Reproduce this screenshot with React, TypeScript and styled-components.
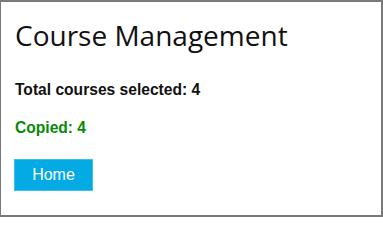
import React from "react";
import styled, { createGlobalStyle } from "styled-components";

const Global = createGlobalStyle`
  html, body { margin: 0; padding: 0; background: #fff; }
  body { width: 383px; height: 217px; overflow: hidden; }
`;

const Frame = styled.div`
  box-sizing: border-box;
  width: 383px;
  height: 217px;
  border: 1px solid #7a7a7a;
  border-top-width: 2px;
  border-right-width: 2px;
  border-bottom-width: 2px;
  padding: 15px 14px 0 14px;
  display: flex;
  flex-direction: column;
  align-items: flex-start;
`;

const Title = styled.h1`
  margin: 0;
  font-family: "Open Sans", sans-serif;
  font-weight: 400;
  font-size: 28px;
  line-height: 36px;
  color: #111;
`;

const Line = styled.p<{ $color?: string }>`
  margin: 0;
  font-family: "Liberation Sans", Arial, sans-serif;
  font-weight: 700;
  font-size: 15.6px;
  line-height: 18px;
  color: ${(p) => p.$color ?? "#111"};
`;

const Stack = styled.div`
  display: flex;
  flex-direction: column;
  gap: 20px;
  margin-top: 28px;
`;

const Button = styled.button`
  margin: 22px 0 0 -1px;
  box-sizing: border-box;
  width: 79px;
  height: 32px;
  border: 1px solid #3fbdea;
  background: #04aae4;
  color: #fff;
  font-family: "Liberation Sans", Arial, sans-serif;
  font-size: 16px;
  padding: 0;
  cursor: pointer;
`;

export default function App() {
  return (
    <>
      <Global />
      <Frame>
        <Title>Course Management</Title>
        <Stack>
          <Line>Total courses selected: 4</Line>
          <Line $color="#0a8a0a">Copied: 4</Line>
        </Stack>
        <Button>Home</Button>
      </Frame>
    </>
  );
}
